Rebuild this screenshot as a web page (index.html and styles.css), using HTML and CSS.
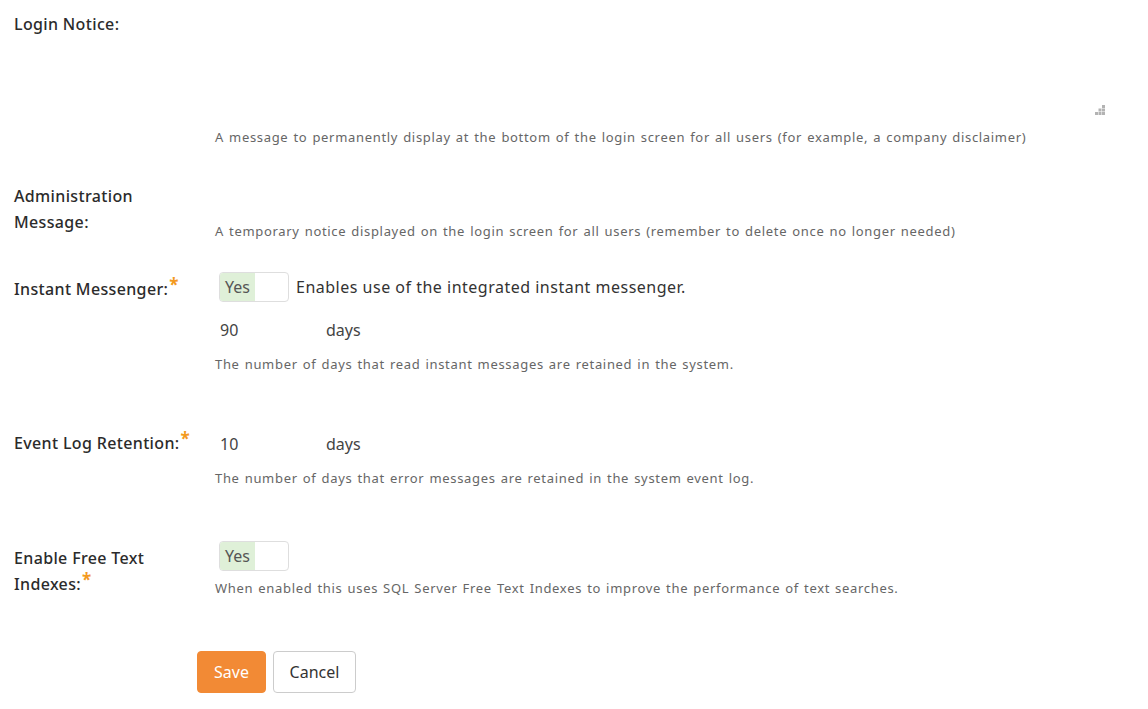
FILE: index.html
```html
<!DOCTYPE html>
<html>
<head>
<meta charset="utf-8">
<link rel="stylesheet" href="styles.css">
</head>
<body>
<form class="form">
  <div class="row row-login">
    <div class="label">Login Notice:</div>
    <div class="field">
      <div class="textarea">
        <svg class="grip" width="10" height="10" viewBox="0 0 10 10"><rect x="7" y="0" width="3" height="3" fill="#b3b3b3"/><rect x="3.5" y="3.5" width="3" height="3" fill="#b3b3b3"/><rect x="7" y="3.5" width="3" height="3" fill="#b3b3b3"/><rect x="0" y="7" width="3" height="3" fill="#b3b3b3"/><rect x="3.5" y="7" width="3" height="3" fill="#b3b3b3"/><rect x="7" y="7" width="3" height="3" fill="#b3b3b3"/></svg>
      </div>
      <div class="hint">A message to permanently display at the bottom of the login screen for all users (for example, a company disclaimer)</div>
    </div>
  </div>

  <div class="row row-admin">
    <div class="label">Administration<br>Message:</div>
    <div class="field">
      <div class="hint">A temporary notice displayed on the login screen for all users (remember to delete once no longer needed)</div>
    </div>
  </div>

  <div class="row row-im">
    <div class="label">Instant Messenger:<span class="req">*</span></div>
    <div class="field">
      <div class="inline">
        <span class="toggle"><span class="yes">Yes</span></span>
        <span class="inline-text">Enables use of the integrated instant messenger.</span>
      </div>
      <div class="days"><span class="num">90</span><span class="unit">days</span></div>
      <div class="hint">The number of days that read instant messages are retained in the system.</div>
    </div>
  </div>

  <div class="row row-event">
    <div class="label">Event Log Retention:<span class="req">*</span></div>
    <div class="field">
      <div class="days"><span class="num">10</span><span class="unit">days</span></div>
      <div class="hint">The number of days that error messages are retained in the system event log.</div>
    </div>
  </div>

  <div class="row row-fti">
    <div class="label">Enable Free Text<br>Indexes:<span class="req">*</span></div>
    <div class="field">
      <span class="toggle"><span class="yes">Yes</span></span>
      <div class="hint hint-fti">When enabled this uses SQL Server Free Text Indexes to improve the performance of text searches.</div>
    </div>
  </div>

  <div class="buttons">
    <button type="button" class="btn btn-save">Save</button>
    <button type="button" class="btn btn-cancel">Cancel</button>
  </div>
</form>
</body>
</html>
```

FILE: styles.css
```css
html, body {
  margin: 0;
  padding: 0;
  background: #fff;
}
body {
  font-family: "Noto Sans", "Open Sans", sans-serif;
  color: #333;
}
.form {
  padding: 11px 0 0 14px;
}
.row {
  display: grid;
  grid-template-columns: 201px 1fr;
}
.label {
  font-size: 16px;
  line-height: 26px;
  color: #2b2b2b;
  font-weight: 500;
  letter-spacing: 0.35px;
}
.req {
  color: #f39a1f;
  font-size: 17px;
  font-weight: 700;
  line-height: 1;
  vertical-align: top;
  position: relative;
  top: 0;
  margin-left: 1px;
}
.field {
  min-width: 0;
}
.hint {
  font-size: 13px;
  line-height: 16px;
  color: #666;
  letter-spacing: 0.68px;
  word-spacing: 1px;
}
.textarea {
  position: relative;
  height: 110px;
  margin-top: -1px;
  margin-right: 38px;
}
.grip {
  position: absolute;
  right: 5px;
  bottom: 5px;
}
.row-login .hint {
  margin-top: 9px;
}
.row-admin {
  margin-top: 38px;
}
.row-admin .field {
  padding-top: 40px;
}
.row-im {
  margin-top: 33px;
}
.row-im .label {
  padding-top: 4px;
}
.inline {
  display: flex;
  align-items: center;
  gap: 7px;
  margin-left: 4px;
}
.toggle {
  display: inline-flex;
  width: 68px;
  height: 28px;
  border: 1px solid #dedede;
  border-radius: 4px;
  overflow: hidden;
  background: #fff;
}
.yes {
  width: 35px;
  background: #dff0d8;
  font-size: 16px;
  line-height: 28px;
  text-align: center;
  color: #555;
}
.inline-text {
  font-size: 16px;
  color: #333;
  letter-spacing: 0.5px;
}
.days {
  display: flex;
  font-size: 16px;
  line-height: 22px;
  color: #444;
  margin: 17px 0 0 5px;
}
.num {
  width: 106px;
}
.row-im .hint {
  margin-top: 15px;
}
.row-event {
  margin-top: 58px;
}
.row-event .days {
  margin-top: 3px;
}
.row-event .hint {
  margin-top: 15px;
}
.row-fti {
  margin-top: 55px;
}
.row-fti .label {
  padding-top: 4px;
}
.row-fti .toggle {
  margin-left: 4px;
}
.hint-fti {
  margin-top: 9px;
}
.buttons {
  display: flex;
  gap: 7px;
  margin: 54px 0 0 183px;
}
.btn {
  font-family: "Noto Sans", "Open Sans", sans-serif;
  font-size: 16px;
  height: 42px;
  border-radius: 4px;
  padding: 0 15px;
  cursor: pointer;
}
.btn-save {
  background: #f28a35;
  border: 1px solid #f28a35;
  color: #fff;
  width: 69px;
}
.btn-cancel {
  background: #fff;
  border: 1px solid #ccc;
  color: #333;
  width: 83px;
}
```
